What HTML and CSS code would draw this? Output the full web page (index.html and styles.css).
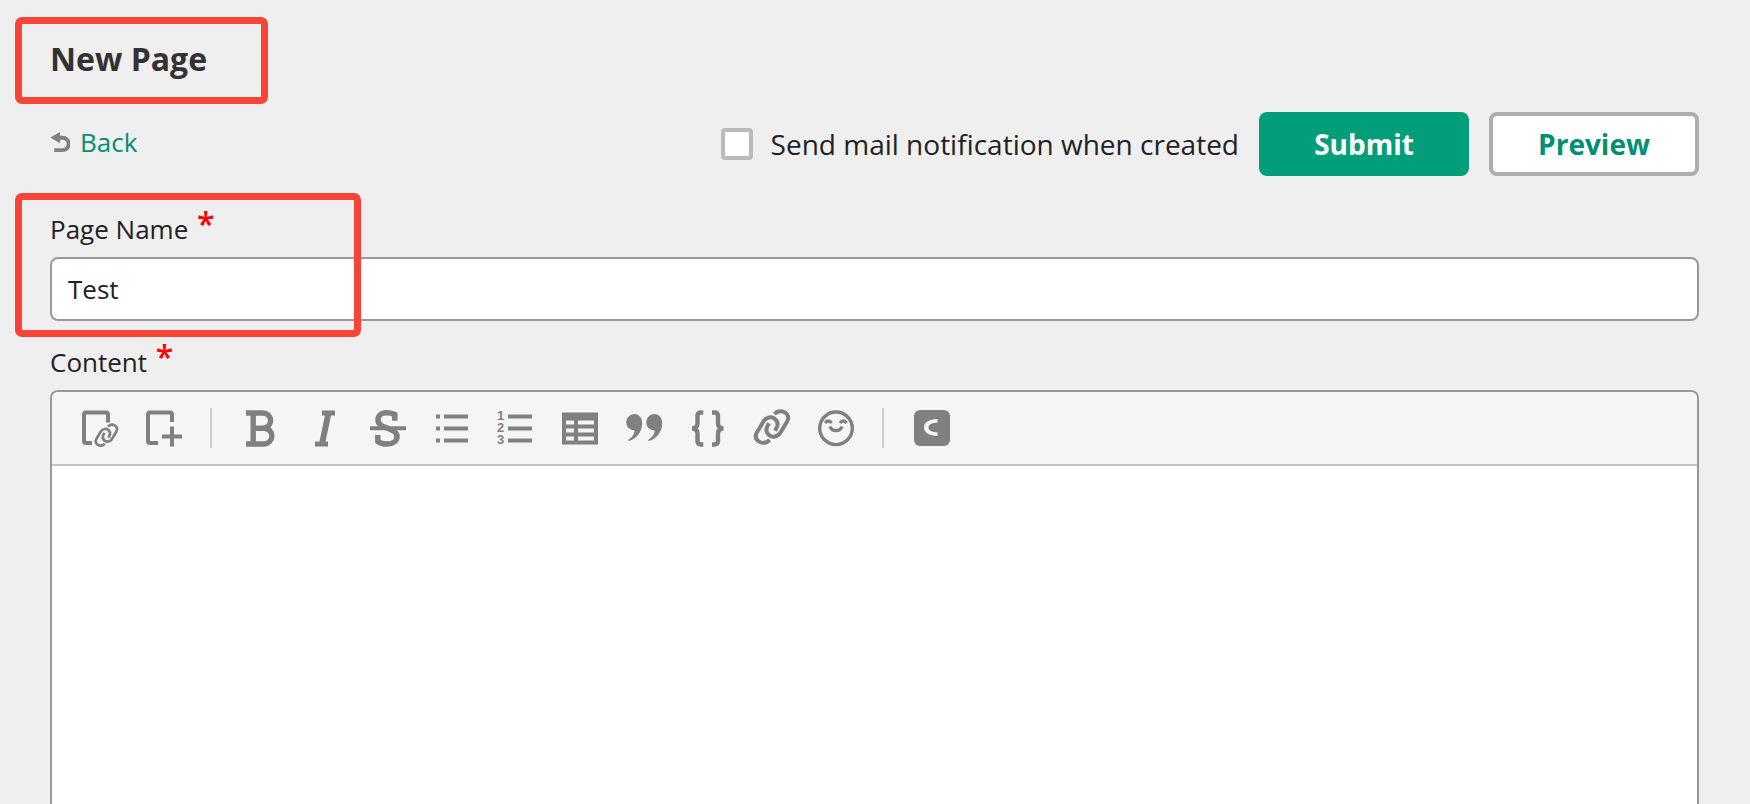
FILE: index.html
```html
<!DOCTYPE html>
<html lang="en">
<head>
  <meta charset="UTF-8">
  <meta name="viewport" content="width=device-width, initial-scale=1.0">
  <title>New Page</title>
  <link rel="stylesheet" href="styles.css">
</head>
<body>
  <form class="page">
    <div class="title-row">
      <h1>New Page</h1>
      <span class="mark mark-title"></span>
    </div>

    <div class="actions">
      <a class="back" href="#">
        <svg class="back-icon" viewBox="0 0 60 62"><path d="M0 17L30 0V35Z" fill="currentColor"/><path d="M27 18H38a16 16 0 0 1 0 38H12" fill="none" stroke="currentColor" stroke-width="12"/></svg>
        Back
      </a>
      <label class="notify"><input type="checkbox" class="check"> Send mail notification when created</label>
      <button type="submit" class="btn btn-submit">Submit</button>
      <button type="button" class="btn btn-preview">Preview</button>
    </div>

    <div class="field">
      <label for="pageName">Page Name <span class="required">*</span></label>
      <input type="text" id="pageName" class="text-input" name="pageName" value="Test">
      <span class="mark mark-name"></span>
    </div>

    <div class="field field-content">
      <label for="content">Content <span class="required">*</span></label>
      <div class="editor">
        <div class="toolbar">
          <button type="button" class="tool" aria-label="Page link">
            <svg viewBox="0 0 36 36"><path d="M10 33H4Q2 33 2 31V4.500Q2 2.500 4 2.500H24Q26 2.500 26 4.500V12.500" stroke-width="4"/><g transform="translate(12.500 14) scale(0.220)" stroke-width="12"><path d="M47 90C38 99 25 101 14 94C4 87 3 77 9 67L28 35C36 21 53 18 63 27C71 34 73 43 68 53L63 62"/><path d="M47 90C38 99 25 101 14 94C4 87 3 77 9 67L28 35C36 21 53 18 63 27C71 34 73 43 68 53L63 62" transform="rotate(180 54 51)"/></g></svg>
          </button>
          <button type="button" class="tool" aria-label="New child page">
            <svg viewBox="0 0 36 36"><path d="M12 33H4Q2 33 2 31V4.500Q2 2.500 4 2.500H24Q26 2.500 26 4.500V12M16 26.500H36M26 16.500V36.500" stroke-width="4"/></svg>
          </button>
          <span class="divider"></span>
          <button type="button" class="tool" aria-label="Bold">
            <svg viewBox="0 0 36 36"><path d="M4 3H21a7.500 7.500 0 0 1 0 15.200H11M20 18.200h2a7.900 7.900 0 0 1 0 15.800H4M11.200 3V34" stroke-width="5.400"/></svg>
          </button>
          <button type="button" class="tool" aria-label="Italic">
            <svg viewBox="0 0 36 36"><path d="M16 3H29M9 34H22" stroke-width="5"/><path d="M22.500 3L16 34" stroke-width="6"/></svg>
          </button>
          <button type="button" class="tool" aria-label="Strikethrough">
            <svg viewBox="0 0 36 36"><path d="M24.800 10.700V4.500C22 3.300 20 2.800 16.500 2.800C11 2.800 8 6 8 10C8 14.500 12 16 17 18C23 20.500 27 22 27 26.500C27 31 23 34 17.500 34C13 34 10 33.200 7.800 31.500V25" stroke-width="5.500"/><path d="M0 18.300H36" stroke-width="4"/></svg>
          </button>
          <button type="button" class="tool" aria-label="Bulleted list">
            <svg viewBox="0 0 36 36"><path d="M2 6.500H6M10 6.500H34M2 18.500H6M10 18.500H34M2 30.500H6M10 30.500H34" stroke-width="4"/></svg>
          </button>
          <button type="button" class="tool" aria-label="Numbered list">
            <svg viewBox="0 0 36 36"><path d="M10 6.500H34M10 18.500H34M10 30.500H34" stroke-width="4"/><text x="-1" y="10">1</text><text x="-1" y="22">2</text><text x="-1" y="34">3</text></svg>
          </button>
          <button type="button" class="tool" aria-label="Table">
            <svg viewBox="0 0 36 36"><path class="solid" fill-rule="evenodd" d="M0 2.500H36V34.500H0ZM4 10.500V14.500H12V10.500ZM16 10.500V14.500H32V10.500ZM4 18.500V22.500H12V18.500ZM16 18.500V22.500H32V18.500ZM4 26.500V30.500H12V26.500ZM16 26.500V30.500H32V26.500Z"/></svg>
          </button>
          <button type="button" class="tool" aria-label="Quote">
            <svg viewBox="0 0 36 36"><path class="solid" d="M8 4a8 8 0 0 1 8.200 8.500C16.200 22 11 28.500 2.800 31L2 30C6 27.500 8.500 24 8.700 20.400A8.200 8.200 0 0 1 8 4ZM28 4a8 8 0 0 1 8.200 8.500C36.200 22 31 28.500 22.800 31L22 30C26 27.500 28.500 24 28.700 20.400A8.200 8.200 0 0 1 28 4Z"/></svg>
          </button>
          <button type="button" class="tool" aria-label="Code">
            <svg viewBox="0 0 36 36"><path d="M13.300 2.500H11Q7.500 2.500 7.500 6V13Q7.500 18.500 2 18.500Q7.500 18.500 7.500 24V31Q7.500 34.500 11 34.500H13.300M22 2.500H24.500Q28 2.500 28 6V13Q28 18.500 33.500 18.500Q28 18.500 28 24V31Q28 34.500 24.500 34.500H22" stroke-width="4.400"/></svg>
          </button>
          <button type="button" class="tool" aria-label="Link">
            <svg viewBox="0 0 108 108"><path d="M47 90C38 99 25 101 14 94C4 87 3 77 9 67L28 35C36 21 53 18 63 27C71 34 73 43 68 53L63 62" stroke-width="12"/><path d="M47 90C38 99 25 101 14 94C4 87 3 77 9 67L28 35C36 21 53 18 63 27C71 34 73 43 68 53L63 62" stroke-width="12" transform="rotate(180 54 51)"/></svg>
          </button>
          <button type="button" class="tool" aria-label="Emoji">
            <svg viewBox="0 0 36 36"><circle cx="18" cy="18.300" r="16.300" stroke-width="3.400"/><path d="M7 13Q10.300 9 13.600 13M22 13Q25.300 9 28.600 13M12 16.500C14 22 22 22 24 16.500" stroke-width="3.400"/></svg>
          </button>
          <span class="divider"></span>
          <button type="button" class="tool" aria-label="Cacoo">
            <svg viewBox="0 0 36 36"><rect class="solid" width="36" height="36" rx="6"/><path class="cut" d="M23.500 9C15 9.300 10 12.500 10 17.500C10 22.500 15 25.700 23.500 26V22.500C17.500 22 14.500 20.500 14.500 17.500C14.500 14.500 17.500 13 23.500 12.500Z"/></svg>
          </button>
        </div>
        <textarea id="content" name="content"></textarea>
      </div>
    </div>
  </form>
</body>
</html>
```
FILE: styles.css
```css
* { box-sizing: border-box; }
body { margin: 0; background: #efefef; color: #222; font-family: "Open Sans", "Noto Sans", sans-serif; font-size: 26px; }
.page { display: flex; flex-direction: column; height: 100vh; padding: 36px 51px 0 50px; overflow: hidden; }

.title-row { position: relative; }
h1 { margin: 0; font-size: 32px; line-height: 46px; font-weight: bold; color: #333; }

.actions { display: flex; align-items: center; gap: 20px; margin-top: 30px; }
.back { display: flex; align-items: center; gap: 10px; margin-right: auto; padding-bottom: 4px; color: #008f70; text-decoration: none; }
.back-icon { width: 20px; height: 20px; color: #808080; }
.notify { display: flex; align-items: center; gap: 18px; font-size: 28px; }
.check { appearance: none; width: 32px; height: 32px; margin: 0; border: 4px solid #bababa; border-radius: 4px; background: #fff; }
.btn { width: 210px; height: 64px; padding: 0; border-radius: 8px; font-family: inherit; font-size: 28px; font-weight: bold; cursor: pointer; }
.btn-submit { border: none; background: #029e79; color: #fff; }
.btn-preview { border: 4px solid #adadad; background: #fff; color: #008f70; }

.field { position: relative; display: flex; flex-direction: column; gap: 8px; margin-top: 33px; }
.field label { height: 40px; line-height: 40px; }
.required { margin-left: 2px; color: #f00; font-size: 32px; font-weight: 600; line-height: 1px; vertical-align: 3px; }
.text-input { height: 64px; padding: 0 16px; border: 2px solid #999; border-radius: 8px; background: #fff; color: #222; font-family: inherit; font-size: 26px; }
.field-content { flex: 1; margin-top: 21px; }

.editor { display: flex; flex-direction: column; flex: 1; border: 2px solid #999; border-bottom: none; border-radius: 8px 8px 0 0; background: #fff; overflow: hidden; }
.toolbar { display: flex; align-items: center; gap: 28px; height: 74px; padding: 0 30px; border-bottom: 2px solid #c4c4c4; background: #f5f5f5; }
.tool { width: 36px; height: 36px; padding: 0; border: none; background: none; color: #808080; cursor: pointer; }
.tool svg { display: block; width: 36px; height: 36px; overflow: visible; fill: none; stroke: currentColor; }
.tool text { fill: currentColor; stroke: none; font-family: "Liberation Sans", Arial, sans-serif; font-size: 13px; font-weight: bold; }
.tool .solid { fill: currentColor; stroke: none; }
.tool .cut { fill: #f5f5f5; stroke: none; }
.divider { width: 2px; height: 40px; margin-right: 2px; background: #ccc; }
textarea { flex: 1; padding: 16px; border: none; outline: none; resize: none; font-family: inherit; font-size: 26px; }

/* red highlight boxes */
.mark { position: absolute; border: 7px solid #f64436; border-radius: 7px; pointer-events: none; }
.mark-title { top: -19px; left: -35px; width: 253px; height: 87px; }
.mark-name { top: -16px; left: -35px; width: 346px; height: 144px; }
```
